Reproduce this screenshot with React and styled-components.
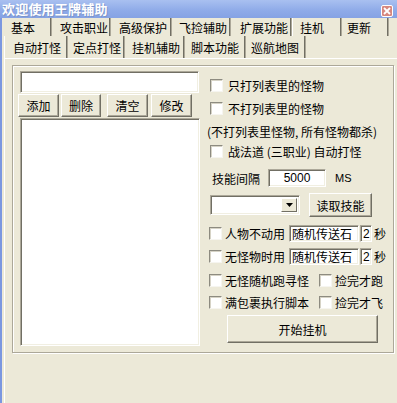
import React from 'react'
import styled, { createGlobalStyle } from 'styled-components'

const GlobalStyle = createGlobalStyle`
    html, body {
        margin: 0;
        padding: 0;
        background: #ece9d8;
    }
    * {
        box-sizing: border-box;
    }
`

const Window = styled.div`
    width: 397px;
    height: 403px;
    overflow: hidden;
    display: flex;
    flex-direction: column;
    background: #ece9d8;
    font-family: 'Noto Sans CJK SC', 'Noto Sans', sans-serif;
    font-size: 12px;
    color: #000;
`
const TitleBar = styled.div`
    height: 18px;
    flex-shrink: 0;
    display: flex;
    align-items: center;
    justify-content: space-between;
    padding: 0 4px 0 2px;
    background: linear-gradient(#a9c0f0, #8eaae8 60%, #85a2e4);
`
const Title = styled.span`
    color: #fff;
    font-weight: bold;
    font-size: 13px;
    line-height: 18px;
    letter-spacing: 0.2px;
    text-shadow: 1px 1px 0 #7d95c8;
`
const CloseBtn = styled.div`
    width: 12px;
    height: 12px;
    margin-top: 3px;
    border: 1px solid #fff;
    border-radius: 2px;
    background: #d6877f;
    display: flex;
    align-items: center;
    justify-content: center;
`
const Body = styled.div`
    flex: 1;
    display: flex;
    flex-direction: column;
    border-left: 2px solid #7b97e0;
`
const TabRow = styled.div`
    display: flex;
    height: ${p => p.$h}px;
    padding-left: ${p => p.$pl}px;
    flex-shrink: 0;
`
const Tab = styled.div`
    width: ${p => p.$w}px;
    height: 100%;
    padding-left: ${p => p.$pl}px;
    display: flex;
    align-items: center;
    white-space: nowrap;
    padding-top: ${p => (p.$active ? 0 : 1)}px;
    border-left: 1px solid ${p => (p.$active ? '#fff' : 'transparent')};
    border-right: 1px solid #aca899;
    box-shadow: inset -1px 0 0 #716f64;
`
const Panel = styled.div`
    flex: 1;
    margin-left: 2px;
    padding: 6px 0 0 7px;
    border-left: 1px solid #fff;
    border-top: 1px solid #fff;
`
const GroupBox = styled.div`
    width: 382px;
    height: 288px;
    display: flex;
    padding: 5px 0 0 5px;
    border: 1px solid #aca899;
    box-shadow: inset 1px 1px 0 #fff, 1px 1px 0 #fff;
`
const LeftCol = styled.div`
    width: 182px;
    display: flex;
    flex-direction: column;
`
const RightCol = styled.div`
    margin-left: 7px;
    display: flex;
    flex-direction: column;
`
const Sunken = styled.div`
    background: #fff;
    border-top: 1px solid #aca899;
    border-left: 1px solid #aca899;
    border-right: 1px solid #fff;
    border-bottom: 1px solid #fff;
    box-shadow: inset 1px 1px 0 #716f64, inset -1px -1px 0 #f1efe2;
`
const TextInput = styled(Sunken)`
    width: ${p => p.$w}px;
    height: ${p => p.$h}px;
    margin-left: ${p => p.$ml || 0}px;
    margin-top: ${p => p.$mt || 0}px;
    display: flex;
    align-items: center;
    justify-content: ${p => (p.$center ? 'center' : 'flex-start')};
    padding-left: ${p => (p.$center ? 0 : 2)}px;
    font-family: ${p => (p.$digits ? "'Liberation Sans', sans-serif" : 'inherit')};
    font-size: 12px;
    white-space: nowrap;
    overflow: hidden;
`
const Button = styled.div`
    width: ${p => p.$w}px;
    height: ${p => p.$h}px;
    margin-left: ${p => p.$ml || 0}px;
    display: flex;
    align-items: center;
    justify-content: center;
    background: #ece9d8;
    border-top: 1px solid #fff;
    border-left: 1px solid #fff;
    border-right: 1px solid #716f64;
    border-bottom: 1px solid #716f64;
    box-shadow: inset -1px -1px 0 #aca899;
    white-space: nowrap;
    font-size: ${p => p.$fs || 12}px;
`
const ButtonRow = styled.div`
    display: flex;
    height: 23px;
    margin-top: 1px;
`
const Row = styled.div`
    display: flex;
    align-items: center;
    height: ${p => p.$h}px;
    margin-top: ${p => p.$mt}px;
    padding-left: ${p => p.$pl || 0}px;
    white-space: nowrap;
`
const Check = styled.div`
    width: 13px;
    height: 13px;
    flex-shrink: 0;
    margin-right: ${p => p.$gap}px;
    margin-left: ${p => p.$ml || 0}px;
    background: #fff;
    border-top: 1px solid #8d8b80;
    border-left: 1px solid #8d8b80;
    border-right: 1px solid #f6f5f0;
    border-bottom: 1px solid #f6f5f0;
    box-shadow: inset 1px 1px 0 #d6d3c6;
`
const Label = styled.span`
    margin-left: ${p => p.$ml || 0}px;
    font-family: ${p => (p.$latin ? "'Liberation Sans', sans-serif" : 'inherit')};
    font-size: ${p => (p.$latin ? 11 : 12)}px;
`
const Combo = styled(Sunken)`
    width: 90px;
    height: 20px;
    display: flex;
    justify-content: flex-end;
    padding: 2px;
`
const ComboArrow = styled.div`
    width: 16px;
    height: 100%;
    display: flex;
    align-items: center;
    justify-content: center;
    background: #ece9d8;
    border-top: 1px solid #fff;
    border-left: 1px solid #fff;
    border-right: 1px solid #716f64;
    border-bottom: 1px solid #716f64;
`

const topTabs = [
    { t: '基本', w: 49, pl: 7 },
    { t: '攻击职业', w: 59, pl: 7 },
    { t: '高级保护', w: 61, pl: 7 },
    { t: '飞捡辅助', w: 59, pl: 6 },
    { t: '扩展功能', w: 61, pl: 8 },
    { t: '挂机', w: 50, pl: 7, active: true },
    { t: '更新', w: 47, pl: 4 },
]
const subTabs = [
    { t: '自动打怪', w: 64, pl: 8, active: true },
    { t: '定点打怪', w: 57, pl: 4 },
    { t: '挂机辅助', w: 60, pl: 6 },
    { t: '脚本功能', w: 61, pl: 5 },
    { t: '巡航地图', w: 60, pl: 4 },
]

export default function App() {
    return (
        <>
            <GlobalStyle />
            <Window>
                <TitleBar>
                    <Title>欢迎使用王牌辅助</Title>
                    <CloseBtn>
                        <svg width="8" height="8" viewBox="0 0 8 8">
                            <path d="M1 1 L7 7 M7 1 L1 7" stroke="#fff" strokeWidth="1.8" />
                        </svg>
                    </CloseBtn>
                </TitleBar>
                <Body>
                    <TabRow $h={18} $pl={1}>
                        {topTabs.map(tab => (
                            <Tab key={tab.t} $w={tab.w} $pl={tab.pl} $active={tab.active}>{tab.t}</Tab>
                        ))}
                    </TabRow>
                    <TabRow $h={22} $pl={2}>
                        {subTabs.map(tab => (
                            <Tab key={tab.t} $w={tab.w} $pl={tab.pl} $active={tab.active}>{tab.t}</Tab>
                        ))}
                    </TabRow>
                    <Panel>
                        <GroupBox>
                            <LeftCol>
                                <TextInput $w={179} $h={22} $ml={2} />
                                <ButtonRow>
                                    <Button $w={41} $h={23}>添加</Button>
                                    <Button $w={40} $h={23} $ml={2}>删除</Button>
                                    <Button $w={41} $h={23} $ml={6}>清空</Button>
                                    <Button $w={41} $h={23} $ml={3}>修改</Button>
                                </ButtonRow>
                                <TextInput $w={180} $h={228} $ml={2} $mt={1} />
                            </LeftCol>
                            <RightCol>
                                <Row $h={16} $mt={6} $pl={3}>
                                    <Check $gap={5} />只打列表里的怪物
                                </Row>
                                <Row $h={16} $mt={7} $pl={3}>
                                    <Check $gap={5} />不打列表里的怪物
                                </Row>
                                <Row $h={16} $mt={7}>
                                    (不打列表里怪物, 所有怪物都杀)
                                </Row>
                                <Row $h={16} $mt={4} $pl={3}>
                                    <Check $gap={5} />战法道 (三职业) 自动打怪
                                </Row>
                                <Row $h={18} $mt={10} $pl={5}>
                                    技能间隔
                                    <TextInput $w={58} $h={18} $ml={8} $center $digits>5000</TextInput>
                                    <Label $ml={9} $latin>MS</Label>
                                </Row>
                                <Row $h={24} $mt={6} $pl={3}>
                                    <Combo>
                                        <ComboArrow>
                                            <svg width="7" height="4" viewBox="0 0 7 4">
                                                <path d="M0 0 H7 L3.5 4 Z" fill="#000" />
                                            </svg>
                                        </ComboArrow>
                                    </Combo>
                                    <Button $w={63} $h={24} $ml={9}>读取技能</Button>
                                </Row>
                                <Row $h={17} $mt={8} $pl={2}>
                                    <Check $gap={3} />人物不动用
                                    <TextInput $w={70} $h={17} $ml={4}>随机传送石</TextInput>
                                    <TextInput $w={12} $h={17} $ml={1} $digits>2</TextInput>
                                    <Label $ml={2}>秒</Label>
                                </Row>
                                <Row $h={17} $mt={6} $pl={2}>
                                    <Check $gap={3} />无怪物时用
                                    <TextInput $w={70} $h={17} $ml={4}>随机传送石</TextInput>
                                    <TextInput $w={12} $h={17} $ml={1} $digits>2</TextInput>
                                    <Label $ml={2}>秒</Label>
                                </Row>
                                <Row $h={16} $mt={7} $pl={2}>
                                    <Check $gap={3} />无怪随机跑寻怪
                                    <Check $gap={3} $ml={10} />捡完才跑
                                </Row>
                                <Row $h={16} $mt={6} $pl={2}>
                                    <Check $gap={3} />满包裹执行脚本
                                    <Check $gap={3} $ml={10} />捡完才飞
                                </Row>
                                <Row $h={28} $mt={5} $pl={20}>
                                    <Button $w={151} $h={28}>开始挂机</Button>
                                </Row>
                            </RightCol>
                        </GroupBox>
                    </Panel>
                </Body>
            </Window>
        </>
    )
}
